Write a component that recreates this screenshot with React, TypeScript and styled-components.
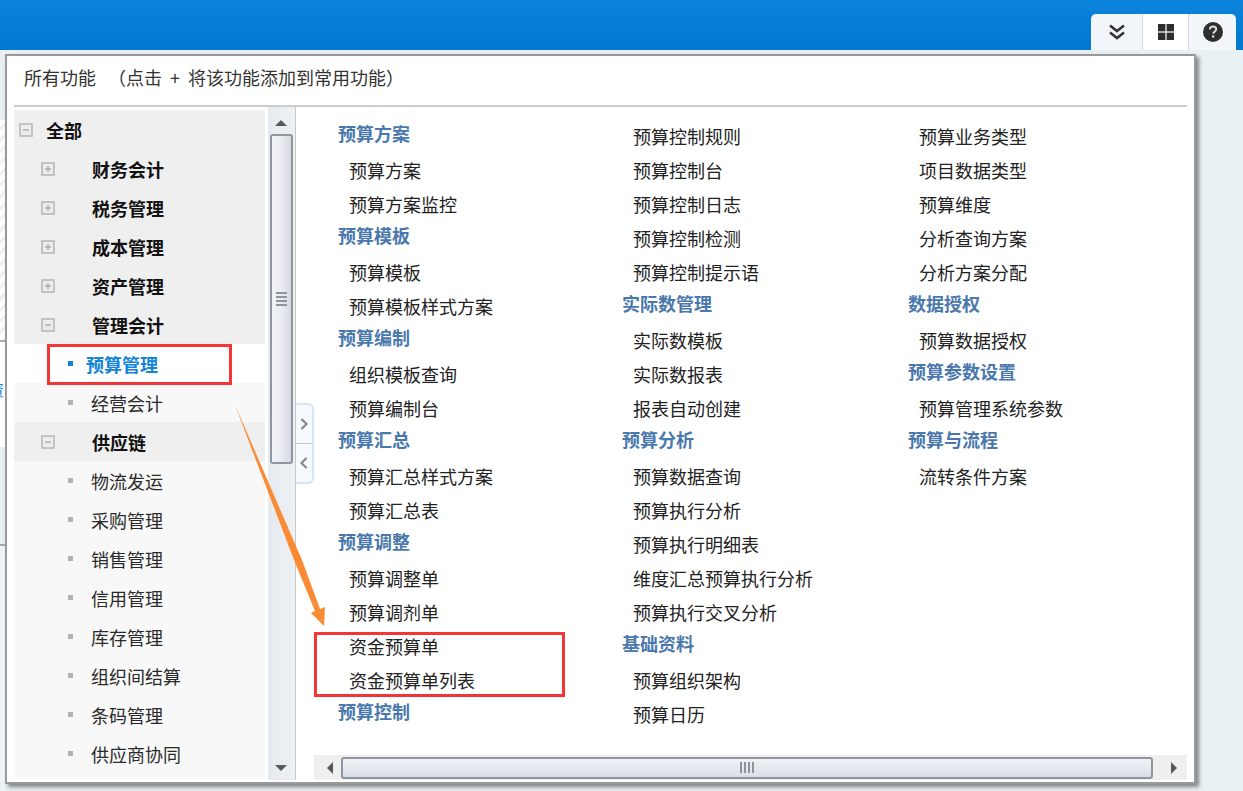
import React from "react";
import styled, { createGlobalStyle } from "styled-components";

const Global = createGlobalStyle`
  html, body { margin: 0; padding: 0; background: #e9f0f4; }
  * { box-sizing: border-box; }
  body { font-family: "Noto Sans CJK SC", "Liberation Sans", sans-serif; }
`;

const Page = styled.div`
  position: relative;
  width: 1243px;
  height: 791px;
  overflow: hidden;
  background: #e9f0f4;
`;

const Header = styled.header`
  height: 50px;
  display: flex;
  justify-content: flex-end;
  align-items: flex-end;
  padding-right: 7px;
  background: linear-gradient(180deg, #0d84dc 0%, #0078cf 100%);
`;

const Toolbar = styled.div`
  width: 145px;
  height: 36px;
  display: grid;
  grid-template-columns: 51px 47px 47px;
  border-radius: 5px 5px 0 0;
  overflow: hidden;
  background: #f2f6fb;
`;

const ToolButton = styled.div<{ $active?: boolean }>`
  display: flex;
  align-items: center;
  justify-content: center;
  background: ${(p) => (p.$active ? "#ffffff" : "transparent")};
  border-left: ${(p) => (p.$active ? "1px solid #d5d9de" : "none")};
  border-right: ${(p) => (p.$active ? "1px solid #d5d9de" : "none")};
`;

const Body = styled.div`
  display: flex;
  padding-top: 4px;
  height: 741px;
`;

const Strip = styled.div`
  width: 5px;
  height: 737px;
  display: flex;
  flex-direction: column;
  overflow: hidden;
`;

const StripPlain = styled.div<{ $h: number; $bg: string }>`
  height: ${(p) => p.$h}px;
  flex: none;
  background: ${(p) => p.$bg};
  overflow: hidden;
`;

const StripHatch = styled.div`
  height: 220px;
  flex: none;
  background: repeating-linear-gradient(135deg, #ffffff 0 5px, #efefef 5px 8px);
`;

const StripRule = styled.div`
  height: 2px;
  flex: none;
  background: #aaaaaa;
`;

const StripGlyph = styled.span`
  display: block;
  margin: 37px 0 0 -12px;
  font-size: 16px;
  line-height: 20px;
  color: #1e88e5;
  white-space: nowrap;
`;

const Panel = styled.section`
  width: 1191px;
  height: 730px;
  flex: none;
  display: flex;
  flex-direction: column;
  padding: 0 7px 2px;
  background: #ffffff;
  border: 2px solid #999999;
  box-shadow: 3px 3px 4px rgba(0, 0, 0, 0.45);
`;

const TitleRow = styled.div`
  height: 51px;
  flex: none;
  display: flex;
  align-items: center;
  padding: 0 0 7px 10px;
  font-size: 18px;
  line-height: 24px;
  color: #333333;
  border-bottom: 2px solid #cccccc;
  white-space: pre;
`;

const TitleHint = styled.span`
  margin-left: 12px;
`;

const Content = styled.div`
  flex: 1;
  min-height: 0;
  display: flex;
`;

const TreeColumn = styled.nav`
  width: 251px;
  height: 667px;
  margin-top: 3px;
  flex: none;
  overflow: hidden;
  background: #f8f8f8;
`;

const TreeRow = styled.div<{ $bg: string }>`
  height: 39px;
  display: flex;
  align-items: center;
  background: ${(p) => p.$bg};
`;

const Expander = styled.svg<{ $root?: boolean }>`
  flex: none;
  width: 14px;
  height: 14px;
  margin-left: ${(p) => (p.$root ? 5 : 27)}px;
  margin-right: ${(p) => (p.$root ? 13 : 37)}px;
`;

const Bullet = styled.i<{ $active?: boolean }>`
  flex: none;
  width: 5px;
  height: 5px;
  margin-left: 54px;
  margin-right: ${(p) => (p.$active ? 13 : 18)}px;
  background: ${(p) => (p.$active ? "#1183d9" : "#b2b2b2")};
`;

const TreeLabel = styled.span<{ $bold?: boolean; $color?: string }>`
  font-size: 18px;
  line-height: 24px;
  font-weight: ${(p) => (p.$bold ? 700 : 400)};
  color: ${(p) => p.$color ?? "#2a2a2a"};
  white-space: nowrap;
`;

const VScroll = styled.div`
  width: 28px;
  margin-left: 3px;
  flex: none;
  display: flex;
  flex-direction: column;
  align-items: center;
  padding: 13px 1px 9px 0;
  background: linear-gradient(90deg, #e6eaee, #eef1f4);
  border-right: 1px solid #c8c8c8;
`;

const Arrow = styled.i<{ $dir: "up" | "down" | "left" | "right" }>`
  flex: none;
  width: 0;
  height: 0;
  border-style: solid;
  border-color: transparent;
  ${(p) =>
    p.$dir === "up"
      ? "border-width: 0 6px 6px; border-bottom-color: #555a60;"
      : p.$dir === "down"
      ? "border-width: 6px 6px 0; border-top-color: #555a60;"
      : p.$dir === "left"
      ? "border-width: 6px 6px 6px 0; border-right-color: #555a60;"
      : "border-width: 6px 0 6px 6px; border-left-color: #555a60;"}
`;

const VThumb = styled.div`
  width: 23px;
  height: 330px;
  margin-top: 8px;
  margin-bottom: auto;
  display: flex;
  flex-direction: column;
  align-items: center;
  justify-content: center;
  gap: 2px;
  border: 2px solid #8f96a0;
  border-radius: 3px;
  background: linear-gradient(90deg, #f2f4f7 0%, #e8ebf0 50%, #d6dae2 100%);
`;

const VGrip = styled.i`
  width: 11px;
  height: 2px;
  background: #8c939c;
`;

const Main = styled.main`
  position: relative;
  flex: 1;
  min-width: 0;
  display: flex;
  flex-direction: column;
`;

const Columns = styled.div`
  flex: 1;
  min-height: 0;
  display: grid;
  grid-template-columns: 284px 286px 1fr;
  padding: 13px 0 0 42px;
  overflow: hidden;
`;

const Column = styled.div`
  display: flex;
  flex-direction: column;
`;

const Heading = styled.div`
  height: 34px;
  padding-top: 1px;
  font-size: 18px;
  line-height: 24px;
  font-weight: 700;
  color: #4a78ad;
  white-space: nowrap;
`;

const Item = styled.div`
  height: 34px;
  padding: 4px 0 0 11px;
  font-size: 18px;
  line-height: 24px;
  color: #222222;
  white-space: nowrap;
`;

const HScroll = styled.div`
  height: 25px;
  margin-left: 18px;
  flex: none;
  display: flex;
  align-items: center;
  padding: 0 10px 0 13px;
  background: #efefef;
`;

const HThumb = styled.div`
  flex: 1;
  height: 22px;
  margin: 0 18px 0 8px;
  display: flex;
  align-items: center;
  justify-content: center;
  gap: 2px;
  border: 2px solid #8f96a0;
  border-radius: 3px;
  background: linear-gradient(180deg, #f0f2f5 0%, #e6e9ef 50%, #d9dde5 100%);
`;

const HGrip = styled.i`
  width: 2px;
  height: 11px;
  background: #8c939c;
`;

const Handle = styled.div`
  position: absolute;
  left: 0;
  top: 296px;
  width: 18px;
  height: 81px;
  display: grid;
  grid-template-rows: 1fr 1fr;
  border: 2px solid #d3e6f7;
  border-left: none;
  border-radius: 0 6px 6px 0;
  background: #f6faff;
`;

const HandlePart = styled.div<{ $first?: boolean }>`
  display: flex;
  align-items: center;
  justify-content: center;
  border-bottom: ${(p) => (p.$first ? "1px solid #c4c8cc" : "none")};
`;

const RedBox = styled.div<{ $x: number; $y: number; $w: number; $h: number }>`
  position: absolute;
  left: ${(p) => p.$x}px;
  top: ${(p) => p.$y}px;
  width: ${(p) => p.$w}px;
  height: ${(p) => p.$h}px;
  border: 3px solid #f53535;
  pointer-events: none;
`;

const ArrowArt = styled.svg`
  position: absolute;
  left: 230px;
  top: 400px;
  width: 100px;
  height: 230px;
  pointer-events: none;
`;

type Row = { label: string; kind: "root" | "open" | "closed" | "leaf" | "active" };

const tree: Row[] = [
  { label: "全部", kind: "root" },
  { label: "财务会计", kind: "closed" },
  { label: "税务管理", kind: "closed" },
  { label: "成本管理", kind: "closed" },
  { label: "资产管理", kind: "closed" },
  { label: "管理会计", kind: "open" },
  { label: "预算管理", kind: "active" },
  { label: "经营会计", kind: "leaf" },
  { label: "供应链", kind: "open" },
  { label: "物流发运", kind: "leaf" },
  { label: "采购管理", kind: "leaf" },
  { label: "销售管理", kind: "leaf" },
  { label: "信用管理", kind: "leaf" },
  { label: "库存管理", kind: "leaf" },
  { label: "组织间结算", kind: "leaf" },
  { label: "条码管理", kind: "leaf" },
  { label: "供应商协同", kind: "leaf" },
];

type Entry = { t: string; h?: boolean };
const H = (t: string): Entry => ({ t, h: true });
const I = (t: string): Entry => ({ t });

const columns: Entry[][] = [
  [
    H("预算方案"), I("预算方案"), I("预算方案监控"),
    H("预算模板"), I("预算模板"), I("预算模板样式方案"),
    H("预算编制"), I("组织模板查询"), I("预算编制台"),
    H("预算汇总"), I("预算汇总样式方案"), I("预算汇总表"),
    H("预算调整"), I("预算调整单"), I("预算调剂单"), I("资金预算单"), I("资金预算单列表"),
    H("预算控制"),
  ],
  [
    I("预算控制规则"), I("预算控制台"), I("预算控制日志"), I("预算控制检测"), I("预算控制提示语"),
    H("实际数管理"), I("实际数模板"), I("实际数报表"), I("报表自动创建"),
    H("预算分析"), I("预算数据查询"), I("预算执行分析"), I("预算执行明细表"), I("维度汇总预算执行分析"), I("预算执行交叉分析"),
    H("基础资料"), I("预算组织架构"), I("预算日历"),
  ],
  [
    I("预算业务类型"), I("项目数据类型"), I("预算维度"), I("分析查询方案"), I("分析方案分配"),
    H("数据授权"), I("预算数据授权"),
    H("预算参数设置"), I("预算管理系统参数"),
    H("预算与流程"), I("流转条件方案"),
  ],
];

function ExpanderIcon({ open, root }: { open: boolean; root?: boolean }) {
  return (
    <Expander $root={root} viewBox="0 0 14 14">
      <rect x="1" y="1" width="12" height="12" fill="#ececec" stroke="#b9b9b9" strokeWidth="1.6" />
      <path d="M4 7h6" stroke="#a8a8a8" strokeWidth="1.3" />
      {!open && <path d="M7 4v6" stroke="#a8a8a8" strokeWidth="1.3" />}
    </Expander>
  );
}

function TreeItem({ row }: { row: Row }) {
  if (row.kind === "leaf" || row.kind === "active") {
    const active = row.kind === "active";
    return (
      <TreeRow $bg={active ? "#ffffff" : "#f8f8f8"}>
        <Bullet $active={active} />
        <TreeLabel $bold={active} $color={active ? "#1183d9" : undefined}>
          {row.label}
        </TreeLabel>
      </TreeRow>
    );
  }
  return (
    <TreeRow $bg="#efefef">
      <ExpanderIcon open={row.kind !== "closed"} root={row.kind === "root"} />
      <TreeLabel $bold $color="#111111">
        {row.label}
      </TreeLabel>
    </TreeRow>
  );
}

export default function App() {
  return (
    <Page>
      <Global />
      <Header>
        <Toolbar>
          <ToolButton>
            <svg width="20" height="20" viewBox="0 0 20 20" fill="none" stroke="#333" strokeWidth="2.6">
              <path d="M3 3.5l7 5.5 7-5.5" />
              <path d="M3 10.5l7 5.5 7-5.5" />
            </svg>
          </ToolButton>
          <ToolButton $active>
            <svg width="18" height="18" viewBox="0 0 18 18" fill="#2e2e2e">
              <rect x="1" y="1" width="7.4" height="7.4" />
              <rect x="9.6" y="1" width="7.4" height="7.4" />
              <rect x="1" y="9.6" width="7.4" height="7.4" />
              <rect x="9.6" y="9.6" width="7.4" height="7.4" />
            </svg>
          </ToolButton>
          <ToolButton>
            <svg width="20" height="20" viewBox="0 0 20 20">
              <circle cx="10" cy="10" r="10" fill="#2e2e2e" />
              <path d="M6.9 7.6c0-2 1.4-3 3.2-3s3.1 1 3.1 2.7c0 2.3-3 2.3-3 4.5" fill="none" stroke="#d8d8d8" strokeWidth="2" />
              <rect x="9" y="13.3" width="2.3" height="2.3" fill="#d8d8d8" />
            </svg>
          </ToolButton>
        </Toolbar>
      </Header>
      <Body>
        <Strip>
          <StripPlain $h={66} $bg="#e9f0f4" />
          <StripHatch />
          <StripRule />
          <StripPlain $h={105} $bg="#ffffff">
            <StripGlyph>资</StripGlyph>
          </StripPlain>
          <StripPlain $h={97} $bg="#e9f0f4" />
          <StripRule />
          <StripPlain $h={245} $bg="#eef3f6" />
        </Strip>
        <Panel>
          <TitleRow>
            所有功能
            <TitleHint>（点击  +  将该功能添加到常用功能）</TitleHint>
          </TitleRow>
          <Content>
            <TreeColumn>
              {tree.map((row) => (
                <TreeItem key={row.label} row={row} />
              ))}
            </TreeColumn>
            <VScroll>
              <Arrow $dir="up" />
              <VThumb>
                <VGrip />
                <VGrip />
                <VGrip />
                <VGrip />
              </VThumb>
              <Arrow $dir="down" />
            </VScroll>
            <Main>
              <Columns>
                {columns.map((col, i) => (
                  <Column key={i}>
                    {col.map((e, j) =>
                      e.h ? <Heading key={j}>{e.t}</Heading> : <Item key={j}>{e.t}</Item>
                    )}
                  </Column>
                ))}
              </Columns>
              <HScroll>
                <Arrow $dir="left" />
                <HThumb>
                  <HGrip />
                  <HGrip />
                  <HGrip />
                  <HGrip />
                </HThumb>
                <Arrow $dir="right" />
              </HScroll>
              <Handle>
                <HandlePart $first>
                  <svg width="8" height="12" viewBox="0 0 8 12" fill="none" stroke="#85898e" strokeWidth="2.2">
                    <path d="M1.5 1l5 5-5 5" />
                  </svg>
                </HandlePart>
                <HandlePart>
                  <svg width="8" height="12" viewBox="0 0 8 12" fill="none" stroke="#85898e" strokeWidth="2.2">
                    <path d="M6.5 1l-5 5 5 5" />
                  </svg>
                </HandlePart>
              </Handle>
            </Main>
          </Content>
        </Panel>
      </Body>
      <RedBox $x={47} $y={344} $w={185} $h={41} />
      <RedBox $x={314} $y={632} $w={251} $h={65} />
      <ArrowArt viewBox="0 0 100 230">
        <polygon points="5,5 72,160 90,209 95,207 94,226 81,213 85,211 64,160" fill="#f98b35" />
      </ArrowArt>
    </Page>
  );
}
